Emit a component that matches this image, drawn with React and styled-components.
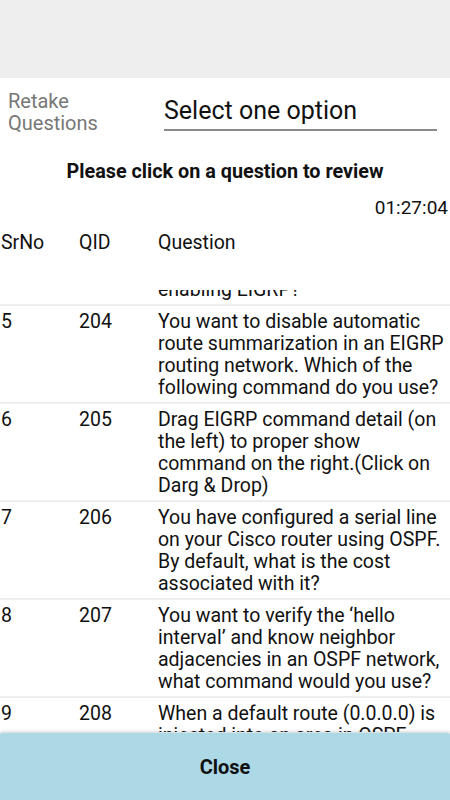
import React, { useLayoutEffect, useRef } from 'react';
import styled, { createGlobalStyle } from 'styled-components';

const GlobalStyle = createGlobalStyle`
  html, body {
    margin: 0;
    padding: 0;
    background: #ffffff;
  }
  body {
    font-family: Roboto, "Noto Sans", "Liberation Sans", sans-serif;
    color: #111;
  }
`;

const questions = [
  { sr: 1, qid: 200, text: 'Which of the following are the characteristics of a link-state routing protocol?' },
  { sr: 2, qid: 201, text: 'What is the default administrative distance of an internal EIGRP route?' },
  { sr: 3, qid: 202, text: 'Which EIGRP table contains all the routes learned from neighboring routers?' },
  { sr: 4, qid: 203, text: 'Which command should be used in global configuration mode for enabling EIGRP?' },
  { sr: 5, qid: 204, text: 'You want to disable automatic route summarization in an EIGRP routing network. Which of the following command do you use?' },
  { sr: 6, qid: 205, text: 'Drag EIGRP command detail (on the left) to proper show command on the right.(Click on Darg & Drop)' },
  { sr: 7, qid: 206, text: 'You have configured a serial line on your Cisco router using OSPF. By default, what is the cost associated with it?' },
  { sr: 8, qid: 207, text: 'You want to verify the \u2018hello interval\u2019 and know neighbor adjacencies in an OSPF network, what command would you use?' },
  { sr: 9, qid: 208, text: 'When a default route (0.0.0.0) is injected into an area in  OSPF, which type of LSA is used?' },
  { sr: 10, qid: 209, text: 'Which of the following OSPF network types elects a DR and a BDR by default?' },
];

const Screen = styled.div`
  display: flex;
  flex-direction: column;
  height: 800px;
  width: 450px;
  overflow: hidden;
`;

const TopBar = styled.div`
  height: 78px;
  background: #eeeeee;
  flex-shrink: 0;
`;

const FilterRow = styled.div`
  display: flex;
  align-items: flex-start;
  padding: 13px 13px 0 8px;
`;

const FilterLabel = styled.div`
  width: 156px;
  font-size: 20px;
  line-height: 21.5px;
  color: #777777;
`;

const Select = styled.div`
  flex: 1;
  margin-top: 5px;
  font-size: 25px;
  line-height: 30px;
  color: #111;
  padding-bottom: 3px;
  border-bottom: 2px solid #8a8a8a;
`;

const Title = styled.div`
  margin-top: 27px;
  text-align: center;
  font-weight: 700;
  font-size: 19.8px;
  line-height: 22px;
`;

const Timer = styled.div`
  margin-top: 14px;
  padding-right: 2px;
  text-align: right;
  font-size: 19px;
  line-height: 22px;
`;

const Grid = styled.div`
  display: grid;
  grid-template-columns: 79px 79px 1fr;
  font-size: 19.5px;
  line-height: 22px;
`;

const HeaderRow = styled(Grid)`
  margin-top: 13px;
`;

const List = styled.div`
  flex: 1;
  margin-top: 36px;
  overflow: hidden;
`;

const Row = styled(Grid)`
  padding: 5px 0 3px;
  border-bottom: 2px solid #eeeeee;
`;

const Cell = styled.div`
  padding-left: ${p => (p.$first ? '1px' : '0')};
`;

const CloseButton = styled.button`
  flex-shrink: 0;
  height: 68px;
  border: none;
  border-top: 1px solid #d8e3e6;
  border-radius: 3px 3px 0 0;
  background: #add8e6;
  font-family: inherit;
  font-size: 20px;
  font-weight: 700;
  color: #111;
  box-shadow: 0 -1px 3px rgba(0, 0, 0, 0.12);
  position: relative;
`;

export default function App() {
  const listRef = useRef(null);
  const anchorRef = useRef(null);

  useLayoutEffect(() => {
    if (listRef.current && anchorRef.current) {
      listRef.current.scrollTop = anchorRef.current.offsetTop - listRef.current.offsetTop - 16;
    }
  }, []);

  return (
    <>
      <GlobalStyle />
      <Screen>
        <TopBar />
        <FilterRow>
          <FilterLabel>Retake<br />Questions</FilterLabel>
          <Select>Select one option</Select>
        </FilterRow>
        <Title>Please click on a question to review</Title>
        <Timer>01:27:04</Timer>
        <HeaderRow>
          <Cell $first>SrNo</Cell>
          <Cell>QID</Cell>
          <Cell>Question</Cell>
        </HeaderRow>
        <List ref={listRef}>
          {questions.map(q => (
            <Row key={q.qid} ref={q.sr === 5 ? anchorRef : null}>
              <Cell $first>{q.sr}</Cell>
              <Cell>{q.qid}</Cell>
              <Cell>{q.text}</Cell>
            </Row>
          ))}
        </List>
        <CloseButton>Close</CloseButton>
      </Screen>
    </>
  );
}
